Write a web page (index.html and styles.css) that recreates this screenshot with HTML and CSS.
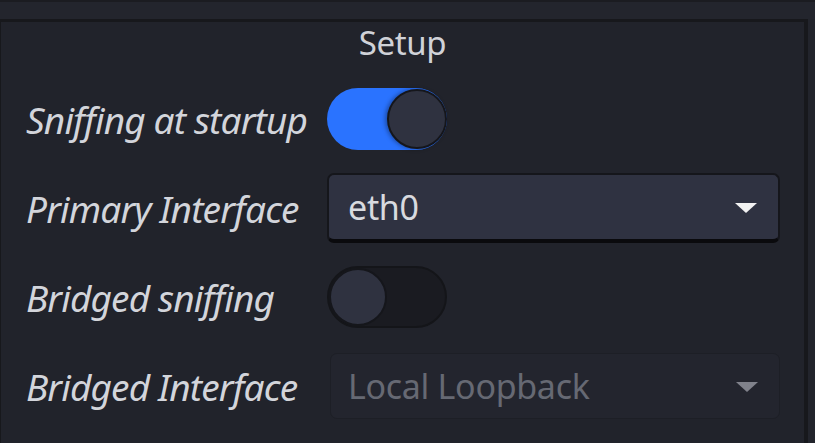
FILE: index.html
```html
<!DOCTYPE html>
<html>
<head>
<meta charset="utf-8">
<link rel="stylesheet" href="styles.css">
</head>
<body>
<div class="topbar"></div>
<section class="panel">
  <h2 class="title">Setup</h2>
  <div class="grid">
    <div class="label">Sniffing at startup</div>
    <div class="control"><div class="toggle on"><span class="knob"></span></div></div>

    <div class="label">Primary Interface</div>
    <div class="control"><div class="select"><span class="value">eth0</span><span class="arrow"></span></div></div>

    <div class="label">Bridged sniffing</div>
    <div class="control"><div class="toggle off"><span class="knob"></span></div></div>

    <div class="label">Bridged Interface</div>
    <div class="control"><div class="select disabled"><span class="value">Local Loopback</span><span class="arrow"></span></div></div>
  </div>
</section>
</body>
</html>
```
FILE: styles.css
```css
html, body {
  margin: 0;
  padding: 0;
  width: 815px;
  height: 443px;
  overflow: hidden;
  background: #22242c;
  font-family: "Noto Sans", "Open Sans", sans-serif;
}
.topbar {
  height: 19px;
  border-top: 2px solid #1b1c21;
  box-sizing: border-box;
  background: #23252d;
}
.panel {
  width: 808px;
  height: 424px;
  box-sizing: border-box;
  border-top: 3px solid #17181c;
  border-left: 1px solid #17181c;
  border-right: 4px solid #17181c;
  background: #21232b;
  padding: 0 24px 0 24px;
}
.title {
  margin: 0;
  height: 62px;
  font-weight: normal;
  font-size: 33px;
  line-height: 42px;
  color: #d0d2d8;
  text-align: center;
  letter-spacing: -0.4px;
}
.grid {
  display: grid;
  grid-template-columns: 302px 1fr;
  grid-auto-rows: 70px;
  row-gap: 19px;
}
.label {
  display: flex;
  align-items: center;
  font-style: italic;
  font-size: 37px;
  letter-spacing: -0.85px;
  color: #d3d5db;
  padding-left: 1px;
  white-space: nowrap;
}
.control {
  display: flex;
  align-items: center;
}
.toggle {
  width: 120px;
  height: 62px;
  border-radius: 31px;
  box-sizing: border-box;
  display: flex;
  align-items: center;
}
.toggle.on {
  background: #2a73ff;
  justify-content: flex-end;
}
.toggle.off {
  background: #1a1b21;
  border: 2px solid #141519;
  justify-content: flex-start;
}
.knob {
  width: 60px;
  height: 60px;
  box-sizing: border-box;
  border-radius: 50%;
  background: #2f3240;
  border: 2px solid #15161b;
  box-shadow: -2px 0 4px rgba(0,0,0,0.35);
}
.toggle.off .knob {
  width: 58px;
  height: 58px;
  box-shadow: none;
}
.select {
  flex: 1;
  height: 70px;
  box-sizing: border-box;
  display: flex;
  align-items: center;
  justify-content: space-between;
  padding: 0 21px 0 19px;
  background: #2f3241;
  border: 2px solid #15161b;
  border-bottom: 4px solid #0a0a0d;
  border-radius: 7px;
  font-size: 34px;
  letter-spacing: -0.3px;
  color: #d8dadf;
}
.select.disabled {
  height: 66px;
  margin-left: 3px;
  background: #23252e;
  border: 1px solid #1d1f26;
  color: #666973;
  padding-left: 17px;
}
.arrow {
  width: 0;
  height: 0;
  border-left: 11px solid transparent;
  border-right: 11px solid transparent;
  border-top: 10px solid #f2f2f2;
  margin-top: 2px;
}
.select.disabled .arrow {
  border-top-color: #80828b;
}
```
